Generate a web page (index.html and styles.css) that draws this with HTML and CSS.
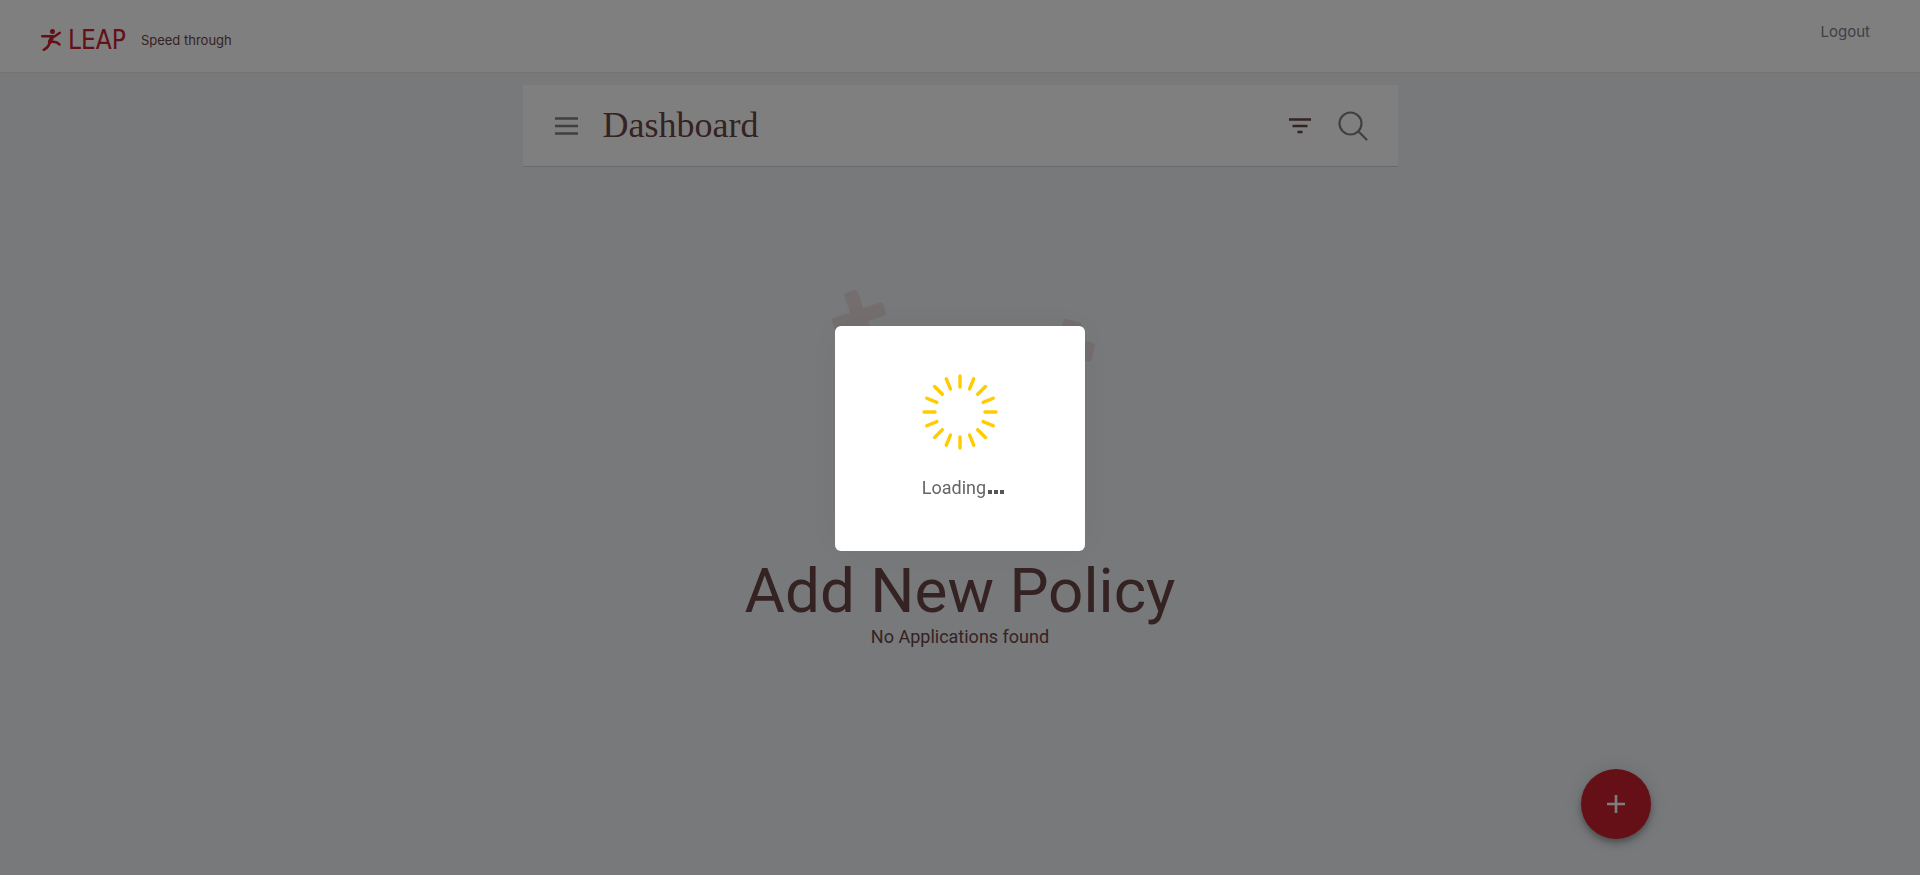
FILE: index.html
```html
<!DOCTYPE html>
<html lang="en">
<head>
<meta charset="utf-8">
<meta name="viewport" content="width=device-width, initial-scale=1">
<title>Dashboard</title>
<link rel="stylesheet" href="styles.css">
</head>
<body>
<header class="topbar">
  <div class="brand">
    <svg class="brand-mark" viewBox="0 0 20 22" aria-hidden="true">
      <circle cx="11.500" cy="2.500" r="2.500"/>
      <path d="M1.200 7.200H10l3.500.3 5.300-3.800M10.500 9l-2 5.500q-1.500 4.500-5.800 6.300M9 13q6.500-1 9.500 2.600"/>
      <path class="torso" d="M11 8.500 8.800 13"/>
    </svg>
    <span class="brand-name">LEAP</span>
    <span class="tagline">Speed through</span>
  </div>
  <a class="logout" href="#">Logout</a>
</header>
<main class="page">
  <section class="toolbar">
    <button class="icon-button" type="button" aria-label="Menu">
      <svg width="24" height="20" viewBox="0 0 24 20"><path class="menu-lines" d="M0 2.500h23M0 10h23M0 17.500h23"/></svg>
    </button>
    <h1 class="title">Dashboard</h1>
    <button class="icon-button" type="button" aria-label="Filter">
      <svg width="24" height="18" viewBox="0 0 24 18"><path class="filter-lines" d="M1 2.500h22M4.500 9h15M9.500 15h5"/></svg>
    </button>
    <button class="icon-button" type="button" aria-label="Search">
      <svg width="30" height="30" viewBox="0 0 30 30"><path class="lens" d="M23.500 12.500a11 11 0 1 1-22 0a11 11 0 1 1 22 0M20.500 20.500l8 8"/></svg>
    </button>
  </section>
  <section class="empty">
    <svg class="crosses" width="280" height="260" viewBox="0 0 280 260" aria-hidden="true">
      <g transform="translate(39 30) rotate(-19)"><rect x="-27" y="-7" width="54" height="14" rx="3"/><rect x="-7" y="-27" width="14" height="54" rx="3"/></g>
      <g transform="translate(247 60) rotate(14)"><rect x="-27" y="-10" width="54" height="19" rx="3"/><rect x="-10" y="-27" width="19" height="54" rx="3"/></g>
    </svg>
    <h2 class="empty-title">Add New Policy</h2>
    <p class="empty-text">No Applications found</p>
  </section>
</main>
<button class="fab" type="button" aria-label="Add new policy">
  <svg width="18" height="18" viewBox="0 0 18 18"><path d="M9 0v18M0 9h18"/></svg>
</button>
<div class="overlay">
  <div class="loader" role="status">
    <svg class="spinner" width="76" height="76" viewBox="-38 -38 76 76" aria-hidden="true">
      <path id="ray" d="M0-36v11"/>
      <use href="#ray" transform="rotate(22.500)"/><use href="#ray" transform="rotate(45)"/><use href="#ray" transform="rotate(67.500)"/><use href="#ray" transform="rotate(90)"/><use href="#ray" transform="rotate(112.500)"/><use href="#ray" transform="rotate(135)"/><use href="#ray" transform="rotate(157.500)"/><use href="#ray" transform="rotate(180)"/><use href="#ray" transform="rotate(202.500)"/><use href="#ray" transform="rotate(225)"/><use href="#ray" transform="rotate(247.500)"/><use href="#ray" transform="rotate(270)"/><use href="#ray" transform="rotate(292.500)"/><use href="#ray" transform="rotate(315)"/><use href="#ray" transform="rotate(337.500)"/>
    </svg>
    <p class="loading">Loading<span class="dots"><i></i><i></i><i></i></span></p>
  </div>
</div>
</body>
</html>
```
FILE: styles.css
```css
* { box-sizing: border-box; }
body {
  margin: 0;
  min-height: 100vh;
  background: #f0f2f5;
  color: #6b4545;
  font-family: Roboto, "Liberation Sans", sans-serif;
}
h1, h2, p { margin: 0; font-weight: 400; }
button { border: 0; padding: 0; background: none; cursor: pointer; }
svg { display: block; fill: none; }

.topbar {
  display: flex;
  justify-content: space-between;
  padding: 0 50px 0 41px;
  height: 73px;
  background: #fff;
  border-bottom: 1px solid #e6e7e9;
}
.brand { display: flex; align-items: center; padding-top: 8px; }
.brand-mark { width: 20px; height: 22px; margin-right: 7px; fill: #c8202d; }
.brand-mark path { fill: none; stroke: #c8202d; stroke-width: 2.4; stroke-linecap: round; }
.brand-mark .torso { stroke-width: 4; }
.brand-name {
  color: #c8202d;
  font: 26px/32px "Liberation Sans Narrow", "DejaVu Sans Condensed", sans-serif;
}
.tagline { margin-left: 15px; font: 13px/16px Inter, sans-serif; }
.logout { margin-top: 22px; color: #80808f; font: 15px/20px Inter, sans-serif; text-decoration: none; }

.page { padding: 12px 16px 0; }
.toolbar {
  display: flex;
  align-items: center;
  max-width: 875px;
  height: 82px;
  margin: 0 auto;
  padding: 0 30px 0 32px;
  background: #fff;
  border-bottom: 1px solid #d2d3d7;
}
.title { flex: 1; margin-left: 24px; padding-bottom: 2px; font: 36px/44px "Liberation Serif", serif; }
.icon-button + .icon-button { margin-left: 26px; }
.menu-lines { stroke: #808080; stroke-width: 2.6; }
.filter-lines { stroke: #6b4545; stroke-width: 2.6; }
.lens { stroke: #808080; stroke-width: 2.2; stroke-linecap: round; }

.empty { display: flex; flex-direction: column; align-items: center; padding-top: 120px; text-align: center; }
.crosses { fill: #e8dcdd; }
.empty-title { margin-top: 8px; font-size: 62px; line-height: 72px; }
.empty-text { font-size: 18px; line-height: 20px; }

.fab {
  position: fixed;
  right: 14%;
  bottom: 36px;
  display: grid;
  place-items: center;
  width: 70px;
  height: 70px;
  border-radius: 50%;
  background: #c8202d;
  box-shadow: 0 3px 5px rgba(0, 0, 0, .2), 0 6px 10px rgba(0, 0, 0, .14), 0 1px 18px rgba(0, 0, 0, .12);
}
.fab path { stroke: #fff; stroke-width: 2.6; }

.overlay {
  position: fixed;
  inset: 0;
  display: grid;
  place-items: center;
  padding-top: 1px;
  background: rgba(0, 0, 0, .5);
}
.loader {
  display: flex;
  flex-direction: column;
  align-items: center;
  width: 250px;
  height: 225px;
  padding-top: 48px;
  border-radius: 6px;
  background: #fff;
  box-shadow: 0 0 40px rgba(0, 0, 0, .05);
}
.spinner { stroke: #fc0; stroke-width: 3.4; stroke-linecap: round; }
.loading { display: flex; align-items: baseline; margin-top: 26px; padding-left: 6px; color: #666; font-size: 18px; line-height: 24px; }
.dots { display: flex; gap: 2px; margin-left: 2px; }
.dots i { width: 4px; height: 4px; background: #555; }
```
